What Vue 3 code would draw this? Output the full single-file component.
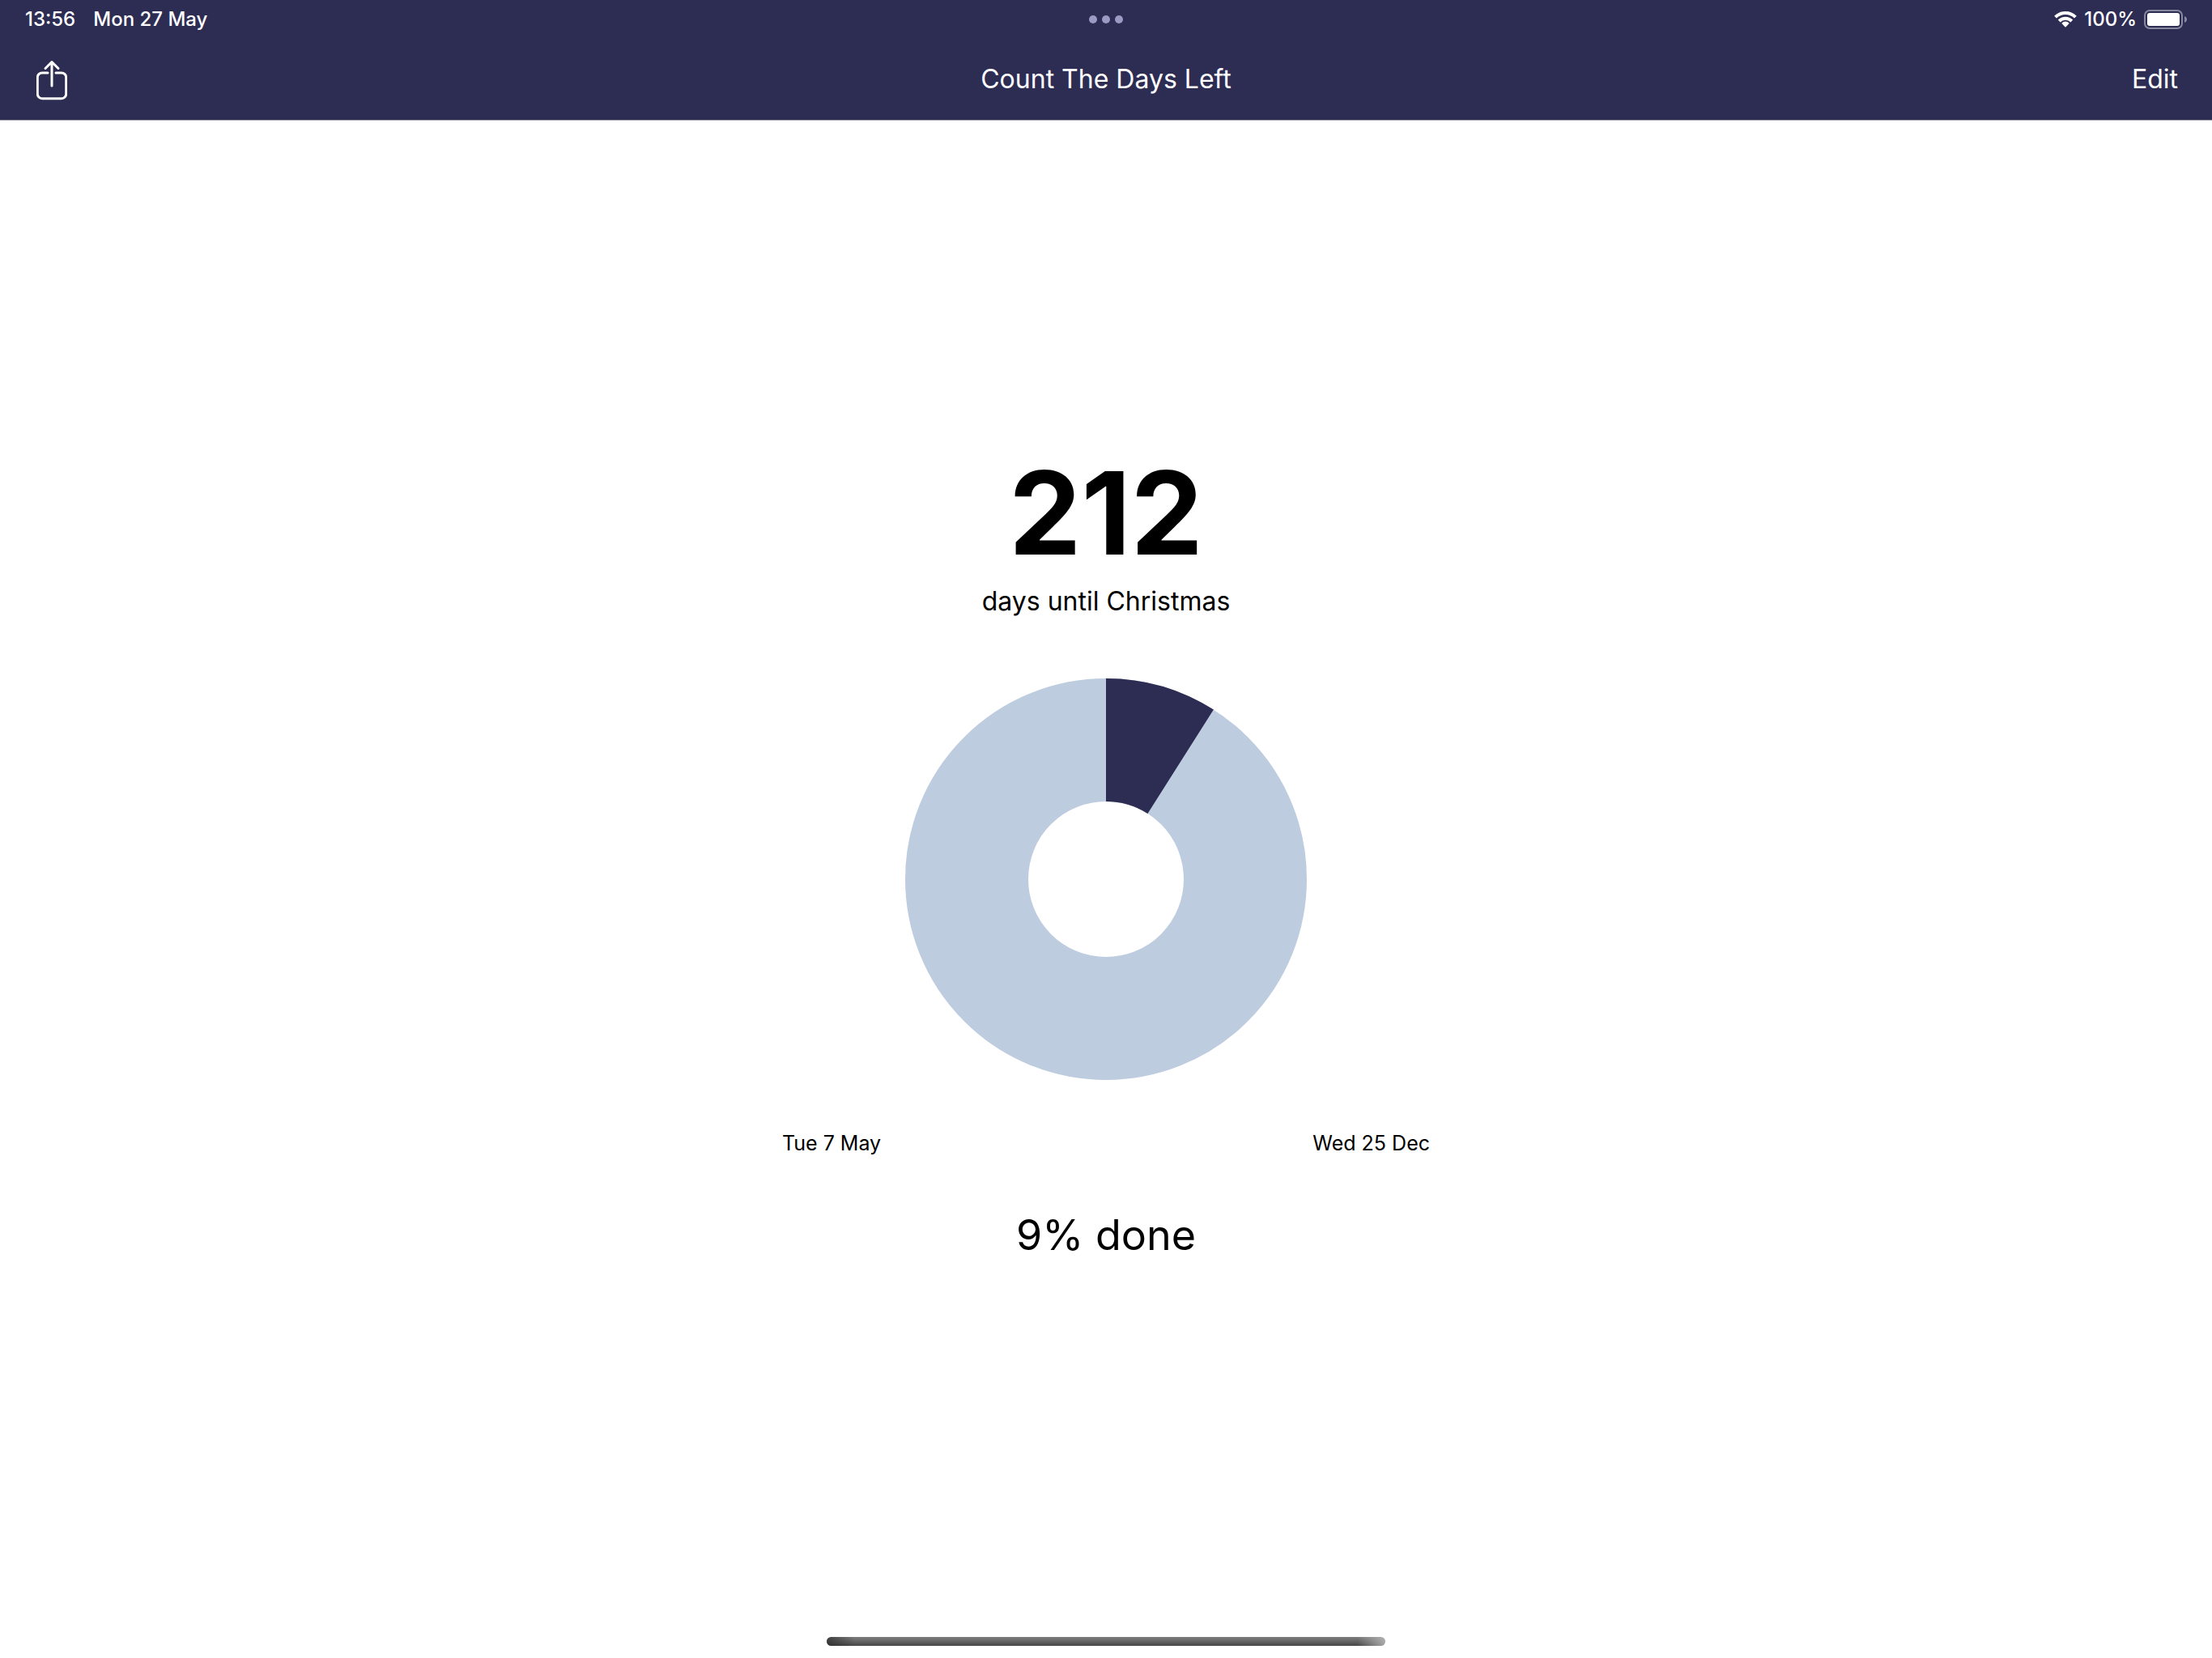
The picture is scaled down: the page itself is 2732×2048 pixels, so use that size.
<script setup>
import { computed } from 'vue'

const daysLeft = 212
const percentDone = 9
const outer = 248
const inner = 96

const slicePath = computed(() => {
  const a = (percentDone / 100) * Math.PI * 2
  const x = Math.sin(a)
  const y = -Math.cos(a)
  return `M0 ${-inner}V${-outer}A${outer} ${outer} 0 0 1 ${outer * x} ${outer * y}L${inner * x} ${inner * y}A${inner} ${inner} 0 0 0 0 ${-inner}Z`
})
</script>

<template>
  <div class="screen">
    <header class="top">
      <div class="status">
        <div class="status-side">
          <time>13:56</time>
          <span>Mon 27 May</span>
        </div>
        <svg class="dots" viewBox="0 0 42 10" aria-hidden="true">
          <circle cx="5" cy="5" r="5" />
          <circle cx="21" cy="5" r="5" />
          <circle cx="37" cy="5" r="5" />
        </svg>
        <div class="status-side status-right">
          <svg class="wifi" viewBox="0 0 28 20" aria-hidden="true">
            <path class="arc" d="M1.600 7.200a17.500 17.500 0 0 1 24.800 0" />
            <path class="arc" d="M6.200 12a11 11 0 0 1 15.600 0" />
            <path d="M18.300 15.200c.3-.3.3-.6 0-.9a6.300 6.300 0 0 0-8.600 0c-.3.3-.3.6 0 .9l3.800 4c.3.3.7.3 1 0Z" />
          </svg>
          <span class="charge">100%</span>
          <svg class="battery" viewBox="0 0 53 24" aria-hidden="true">
            <rect class="shell" x="1" y="1" width="46" height="22" rx="6" />
            <rect x="4" y="4" width="40" height="16" rx="3" />
            <path class="nub" d="M50 8c2 .7 3 2.200 3 4s-1 3.300-3 4Z" />
          </svg>
        </div>
      </div>
      <nav class="bar">
        <button class="share" type="button" aria-label="Share">
          <svg viewBox="0 0 38 52" aria-hidden="true">
            <path d="M14 18H7a5.700 5.700 0 0 0-5.700 5.700V44A5.700 5.700 0 0 0 7 49.700h24a5.700 5.700 0 0 0 5.700-5.700V23.700A5.700 5.700 0 0 0 31 18h-7" />
            <path d="M19 34V5.500M11 12.500l8-8 8 8" />
          </svg>
        </button>
        <h1>Count The Days Left</h1>
        <button class="edit" type="button">Edit</button>
      </nav>
    </header>

    <main class="content">
      <p class="count">{{ daysLeft }}</p>
      <p class="label">days until Christmas</p>
      <svg class="chart" viewBox="-248 -248 496 496" role="img" aria-label="Share of days passed">
        <circle class="ring" r="172" />
        <path class="slice" :d="slicePath" />
      </svg>
      <div class="dates">
        <time datetime="05-07">Tue 7 May</time>
        <time datetime="12-25">Wed 25 Dec</time>
      </div>
      <p class="done">{{ percentDone }}% done</p>
    </main>

    <footer class="home"><div class="home-bar"></div></footer>
  </div>
</template>

<style>
body {
  margin: 0;
  background: #fff;
}
</style>

<style scoped>
.screen {
  display: flex;
  flex-direction: column;
  min-height: 100vh;
  color: #000;
  background: #fff;
  font-family: Inter, "Liberation Sans", sans-serif;
}
.top {
  color: #fff;
  background: #2d2c53;
  border-bottom: 1px solid #a9a9b0;
}
.status,
.bar {
  display: grid;
  grid-template-columns: 1fr auto 1fr;
  align-items: center;
}
.status {
  height: 48px;
  padding: 0 31px;
  font-size: 24px;
  font-weight: 500;
  line-height: 32px;
}
.status-side {
  display: flex;
  align-items: center;
  gap: 22px;
}
.status-right {
  justify-content: flex-end;
  gap: 9px;
}
.dots {
  width: 42px;
  height: 10px;
  fill: #9c99c5;
}
.wifi {
  width: 28px;
  height: 20px;
  fill: #fff;
}
.wifi .arc {
  fill: none;
  stroke: #fff;
  stroke-width: 4;
}
.battery {
  width: 53px;
  height: 24px;
  fill: #fff;
}
.battery .shell {
  fill: none;
  stroke: #8887a0;
  stroke-width: 2;
}
.battery .nub {
  fill: #8887a0;
}
.bar {
  height: 100px;
  padding: 0 42px;
}
.bar h1,
.edit {
  margin: 0;
  font-size: 32px;
  font-weight: 400;
  line-height: 40px;
}
.bar button {
  padding: 0;
  border: 0;
  color: inherit;
  background: none;
  font-family: inherit;
  cursor: pointer;
}
.bar .share {
  display: flex;
  justify-self: start;
  padding-left: 3px;
}
.share svg {
  width: 38px;
  height: 52px;
  fill: none;
  stroke: #fff;
  stroke-width: 3;
  stroke-linecap: round;
  stroke-linejoin: round;
}
.edit {
  justify-self: end;
}
.content {
  flex: 1;
  display: flex;
  flex-direction: column;
  align-items: center;
  justify-content: center;
  padding: 0 24px 64px;
}
.content p {
  margin: 0;
}
.count {
  font-size: 142px;
  font-weight: 700;
  line-height: 172px;
}
.content .label {
  margin-top: 4px;
  font-size: 32px;
  line-height: 40px;
}
.chart {
  width: 496px;
  height: 496px;
  margin: 75px 0 62px;
}
.ring {
  fill: none;
  stroke: #beccdf;
  stroke-width: 152;
}
.slice {
  fill: #2d2c53;
}
.dates {
  display: flex;
  justify-content: space-between;
  width: 100%;
  max-width: 800px;
  font-size: 25px;
  line-height: 32px;
}
.content .done {
  margin-top: 64px;
  font-size: 52px;
  line-height: 68px;
}
.home {
  display: flex;
  justify-content: center;
  padding-bottom: 15px;
}
.home-bar {
  width: 690px;
  height: 11px;
  border-radius: 6px;
  background:
    linear-gradient(90deg, rgba(40, 40, 40, 0.7), transparent 5%, transparent 95%, rgba(190, 190, 190, 0.8)),
    linear-gradient(#7f7f7f, #464646);
}
</style>
